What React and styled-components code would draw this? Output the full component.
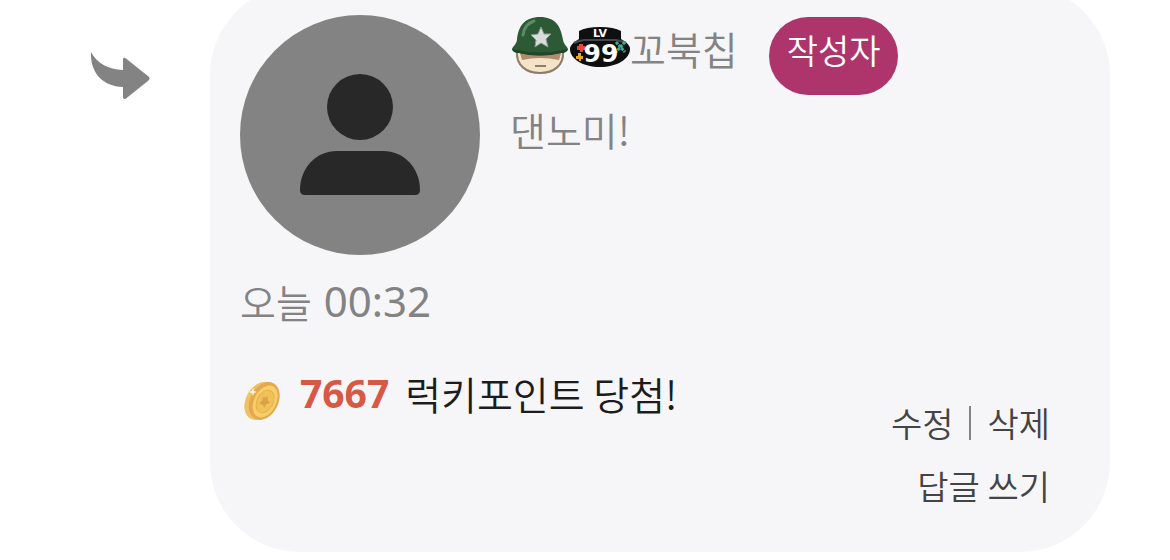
import React from 'react';
import styled, { createGlobalStyle, ThemeProvider } from 'styled-components';

const theme = {
  colors: {
    white: '#ffffff',
    card: '#f6f6f9',
    gray: '#838383',
    dark: '#282828',
    link: '#444444',
    text: '#1c1c1c',
    badge: '#ad356c',
    point: '#d75845',
  },
};

const GlobalStyle = createGlobalStyle`
  * {
    box-sizing: border-box;
  }

  body {
    margin: 0;
    overflow: hidden;
    background: #ffffff;
    font-family: 'Noto Sans CJK KR', 'Noto Sans', sans-serif;
    font-weight: 350;
  }
`;

const Reply = styled.div`
  display: flex;
  align-items: flex-start;
  padding-right: 60px;
`;

const ArrowBox = styled.div`
  flex: none;
  width: 210px;
  padding: 52px 0 0 90px;

  svg {
    display: block;
  }
`;

// the card continues above the top edge of the page
const Card = styled.article`
  flex: 1;
  margin-top: -15px;
  padding: 30px 60px 35px 30px;
  border-radius: 90px;
  background: ${({ theme }) => theme.colors.card};
`;

const Header = styled.header`
  display: flex;
  gap: 30px;
`;

const Avatar = styled.div`
  display: flex;
  flex: none;
  width: 240px;
  height: 240px;
  border-radius: 50%;
  background: ${({ theme }) => theme.colors.gray};
`;

const Author = styled.div`
  color: ${({ theme }) => theme.colors.gray};
  font-size: 39px;
`;

const NameRow = styled.div`
  display: flex;
  align-items: flex-start;
  height: 80px;
  line-height: 66px;

  svg {
    flex: none;
  }
`;

const Name = styled.span`
  margin-right: 31px;
`;

const Badge = styled.span`
  height: 78px;
  margin-top: 2px;
  padding: 0 18px;
  border-radius: 39px;
  color: ${({ theme }) => theme.colors.white};
  background: ${({ theme }) => theme.colors.badge};
  font-size: 34px;
`;

const Greeting = styled.div`
  line-height: 68px;
`;

const Date = styled.time`
  display: flex;
  gap: 12px;
  margin-top: 16px;
  color: ${({ theme }) => theme.colors.gray};
  font-size: 39px;
  line-height: 60px;
`;

const Clock = styled.span`
  font-family: 'Noto Sans', sans-serif;
  font-size: 42px;
  font-weight: 400;
`;

const Footer = styled.footer`
  display: flex;
  justify-content: space-between;
  align-items: flex-start;
  padding-top: 32px;
`;

const Point = styled.p`
  display: flex;
  align-items: center;
  margin: 0;
  color: ${({ theme }) => theme.colors.text};
  font-size: 39px;
  line-height: 60px;

  svg {
    margin: 16px 16px 0 0;
  }

  strong {
    margin-right: 16px;
    color: ${({ theme }) => theme.colors.point};
    font-family: 'Open Sans', sans-serif;
    font-weight: 700;
  }
`;

const Actions = styled.div`
  display: flex;
  flex-direction: column;
  align-items: flex-end;
  padding-top: 28px;
`;

const ActionRow = styled.div`
  display: flex;
  align-items: center;
  height: 63px;
`;

const ActionButton = styled.button`
  padding: 0;
  border: 0;
  color: ${({ theme }) => theme.colors.link};
  background: none;
  font: inherit;
  font-size: 34px;
  line-height: 60px;
  cursor: pointer;
`;

const Divider = styled.span`
  width: 2px;
  height: 34px;
  margin: 0 16px;
  background: ${({ theme }) => theme.colors.gray};
`;

const ArrowIcon = () => (
  <svg width="60" height="48" viewBox="0 0 60 48" fill="#838383" aria-hidden="true">
    <path d="M1 0C7 11 18 17.500 33 18V7Q33.500 5 36 6.500L58.500 24.500Q60.500 26.500 58.500 28.500L36 46.500Q33.500 48 33 45.500V35C12 34.500 0 20 1 0Z" />
  </svg>
);

const PersonIcon = () => (
  <svg width="240" height="240" viewBox="0 0 240 240" fill="#282828" aria-hidden="true">
    <circle cx="120" cy="92" r="33" />
    <path d="M60 175C60 153 76 136 97 136H143C164 136 180 153 180 175Q180 180 175 180H65Q60 180 60 175Z" />
  </svg>
);

const HelmetIcon = () => (
  <svg width="60" height="70" viewBox="0 0 60 70" aria-hidden="true">
    <path d="M7 37C6 50 16 58 30 58S54 50 53 37Z" fill="#f4e3c8" stroke="#8f7d66" strokeWidth="2" />
    <path d="M10 38H51L49 45Q30 41 12 45Z" fill="#b08b72" />
    <path d="M2 34C3 31 6 30 7 25C8 11 15 2 30 2C45 2 51 11 53 25C54 30 57 31 58 34Q57 38 51 38Q30 43 9 38Q3 38 2 34Z" fill="#2b5a34" />
    <path d="M2 34Q30 41 58 34Q57 38 51 38Q30 43 9 38Q3 38 2 34Z" fill="#214628" />
    <path d="M13 20C14 12 18 8 24 6" fill="none" stroke="#5f8a66" strokeWidth="3" strokeLinecap="round" />
    <path d="M31 12L34 19L41 19L36 24L38 32L31 28L25 32L26 25L21 20L28 19Z" fill="#d8dcda" stroke="#8e9c93" />
    <path d="M25 51H36" stroke="#8f7d66" strokeWidth="2" />
  </svg>
);

const LevelText = styled.text`
  fill: #ffffff;
  font-family: 'DejaVu Sans', sans-serif;
  font-weight: 700;
  text-anchor: middle;
`;

const LevelIcon = () => (
  <svg width="60" height="70" viewBox="0 0 60 70" aria-label="LV 99">
    <path d="M9 16Q16 12 30 12T51 16V24Q60 29 60 34C60 44 47 52 30 52S0 44 0 34Q0 29 9 24Z" fill="#0d0f10" />
    <path d="M4 28Q8 26 14 25H46Q52 26 56 28" fill="none" stroke="#44494b" strokeWidth="2" />
    <path d="M9 29h4v2h2v4h-2v2h-3v-2H7v-4h2z" fill="#e44838" />
    <path d="M8 38h3v3h2v3h-2v2H9v-2H6v-3h2z" fill="#e5a82c" />
    <path d="M46 27l9 10m0-10l-9 10" fill="none" stroke="#37ae94" strokeWidth="3" strokeDasharray="3 1" />
    <LevelText x="30" y="22" fontSize="11">LV</LevelText>
    <LevelText x="31" y="47" fontSize="25">99</LevelText>
  </svg>
);

const CoinIcon = () => (
  <svg width="44" height="44" viewBox="0 0 44 44" aria-hidden="true">
    <g transform="rotate(27 22 22)">
      <ellipse cx="20" cy="23" rx="14" ry="20" fill="#f0c164" />
      <ellipse cx="24" cy="21" rx="14" ry="20" fill="#e3a850" />
      <ellipse cx="25" cy="21" rx="11" ry="17" fill="#f6cf68" />
      <ellipse cx="25" cy="21" rx="8" ry="12" fill="#f0c258" stroke="#e6b04d" />
      <path d="M25 15l2 4 3 1-3 3v4l-3-2-3 1 1-5-1-3 3-1z" fill="#dba246" />
    </g>
    <path d="M13 9l1 3 3 1-3 1-1 3-1-3-3-1 3-1z" fill="#fff9df" />
  </svg>
);

const App = () => {
  return (
    <ThemeProvider theme={theme}>
      <GlobalStyle />
      <Reply>
        <ArrowBox>
          <ArrowIcon />
        </ArrowBox>
        <Card>
          <Header>
            <Avatar>
              <PersonIcon />
            </Avatar>
            <Author>
              <NameRow>
                <HelmetIcon />
                <LevelIcon />
                <Name>꼬북칩</Name>
                <Badge>작성자</Badge>
              </NameRow>
              <Greeting>댄노미!</Greeting>
            </Author>
          </Header>
          <Date>
            <span>오늘</span>
            <Clock>00:32</Clock>
          </Date>
          <Footer>
            <Point>
              <CoinIcon />
              <strong>7667</strong>
              <span>럭키포인트 당첨!</span>
            </Point>
            <Actions>
              <ActionRow>
                <ActionButton type="button">수정</ActionButton>
                <Divider />
                <ActionButton type="button">삭제</ActionButton>
              </ActionRow>
              <ActionRow>
                <ActionButton type="button">답글 쓰기</ActionButton>
              </ActionRow>
            </Actions>
          </Footer>
        </Card>
      </Reply>
    </ThemeProvider>
  );
};

export default App;
